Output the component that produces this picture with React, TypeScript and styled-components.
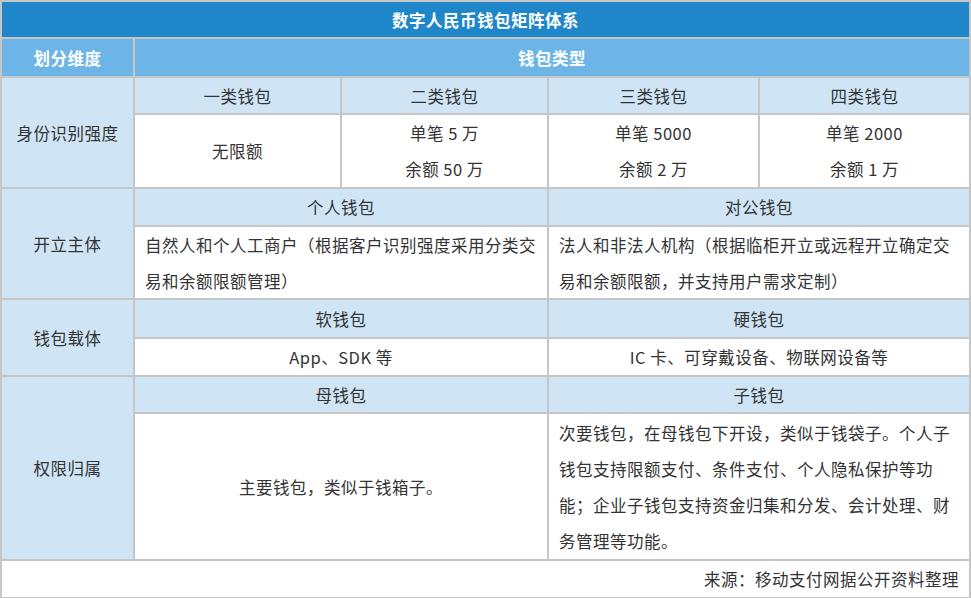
import React from "react";
import styled, { createGlobalStyle } from "styled-components";

const Global = createGlobalStyle`
  html, body { margin: 0; padding: 0; background: #fff; }
  body { font-family: "Noto Sans CJK SC", "Noto Sans", sans-serif; }
`;

const Table = styled.div`
  width: 971px;
  height: 598px;
  box-sizing: border-box;
  display: grid;
  grid-template-columns: 131px 205px 205px 209px 1fr;
  grid-template-rows: 35px 37px 35px 72px 36px 71px 37px 36px 35px 145px 1fr;
  gap: 2px;
  padding: 2px;
  background: #c6c6c6;
`;

type CellProps = { $bg?: string; $color?: string; $bold?: boolean; $align?: string; $col?: string; $row?: string };

const Cell = styled.div<CellProps>`
  background: ${p => p.$bg || "#fff"};
  color: ${p => p.$color || "#333"};
  font-weight: ${p => (p.$bold ? 700 : 400)};
  font-size: 16.5px;
  grid-column: ${p => p.$col || "auto"};
  grid-row: ${p => p.$row || "auto"};
  display: flex;
  align-items: center;
  justify-content: ${p => p.$align || "center"};
  text-align: ${p => (p.$align === "flex-start" ? "left" : p.$align === "flex-end" ? "right" : "center")};
  padding: 0 10px;
  line-height: 36px;
  letter-spacing: 0.5px;
  box-sizing: border-box;
`;

const Lines = styled.div`
  display: flex;
  flex-direction: column;
`;

const TITLE = "#1f87c9";
const HEAD = "#6db5e6";
const LIGHT = "#cfe5f5";

export default function App() {
  return (
    <>
      <Global />
      <Table>
        <Cell $bg={TITLE} $color="#fff" $bold $col="1 / 6">数字人民币钱包矩阵体系</Cell>
        <Cell $bg={HEAD} $color="#fff" $bold>划分维度</Cell>
        <Cell $bg={HEAD} $color="#fff" $bold $col="2 / 6">钱包类型</Cell>

        <Cell $bg={LIGHT} $row="3 / 5">身份识别强度</Cell>
        <Cell $bg={LIGHT}>一类钱包</Cell>
        <Cell $bg={LIGHT}>二类钱包</Cell>
        <Cell $bg={LIGHT}>三类钱包</Cell>
        <Cell $bg={LIGHT}>四类钱包</Cell>
        <Cell>无限额</Cell>
        <Cell><Lines><span>单笔 5 万</span><span>余额 50 万</span></Lines></Cell>
        <Cell><Lines><span>单笔 5000</span><span>余额 2 万</span></Lines></Cell>
        <Cell><Lines><span>单笔 2000</span><span>余额 1 万</span></Lines></Cell>

        <Cell $bg={LIGHT} $row="5 / 7">开立主体</Cell>
        <Cell $bg={LIGHT} $col="2 / 4">个人钱包</Cell>
        <Cell $bg={LIGHT} $col="4 / 6">对公钱包</Cell>
        <Cell $col="2 / 4" $align="flex-start">自然人和个人工商户（根据客户识别强度采用分类交易和余额限额管理）</Cell>
        <Cell $col="4 / 6" $align="flex-start">法人和非法人机构（根据临柜开立或远程开立确定交易和余额限额，并支持用户需求定制）</Cell>

        <Cell $bg={LIGHT} $row="7 / 9">钱包载体</Cell>
        <Cell $bg={LIGHT} $col="2 / 4">软钱包</Cell>
        <Cell $bg={LIGHT} $col="4 / 6">硬钱包</Cell>
        <Cell $col="2 / 4">App、SDK 等</Cell>
        <Cell $col="4 / 6">IC 卡、可穿戴设备、物联网设备等</Cell>

        <Cell $bg={LIGHT} $row="9 / 11">权限归属</Cell>
        <Cell $bg={LIGHT} $col="2 / 4">母钱包</Cell>
        <Cell $bg={LIGHT} $col="4 / 6">子钱包</Cell>
        <Cell $col="2 / 4">主要钱包，类似于钱箱子。</Cell>
        <Cell $col="4 / 6" $align="flex-start">次要钱包，在母钱包下开设，类似于钱袋子。个人子钱包支持限额支付、条件支付、个人隐私保护等功能；企业子钱包支持资金归集和分发、会计处理、财务管理等功能。</Cell>

        <Cell $col="1 / 6" $align="flex-end">来源：移动支付网据公开资料整理</Cell>
      </Table>
    </>
  );
}
